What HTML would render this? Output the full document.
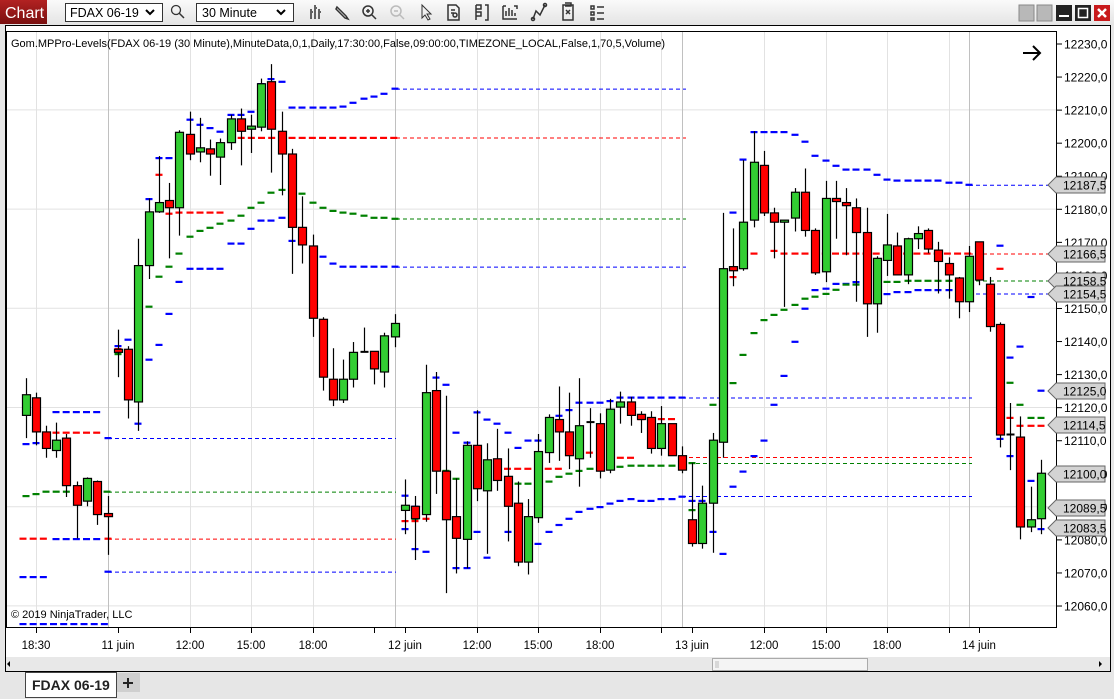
<!DOCTYPE html>
<html><head><meta charset="utf-8"><style>
html,body{margin:0;padding:0;background:#e6e6e6;width:1114px;height:699px;overflow:hidden;font-family:"Liberation Sans",sans-serif}
svg text{font-family:"Liberation Sans",sans-serif}
</style></head><body>
<svg id="s" width="1114" height="699" xmlns="http://www.w3.org/2000/svg">
<defs><linearGradient id="tb" x1="0" y1="0" x2="0" y2="1"><stop offset="0" stop-color="#fafafa"/><stop offset="1" stop-color="#e4e4e4"/></linearGradient>
<linearGradient id="red" x1="0" y1="0" x2="0" y2="1"><stop offset="0" stop-color="#b22222"/><stop offset="1" stop-color="#7a1010"/></linearGradient></defs>
<rect x="0" y="0" width="1114" height="699" fill="#e6e6e6"/>
<rect x="0" y="0" width="1114" height="25" fill="url(#tb)"/>
<rect x="0" y="0" width="47" height="24" fill="url(#red)"/>
<text x="5" y="18" fill="#fff" font-size="16">Chart</text>
<rect x="65.5" y="3.5" width="97" height="18" fill="#fff" stroke="#333"/>
<text x="70" y="17" font-size="12.5" fill="#000">FDAX 06-19</text>
<path d="M146 10l4 4 4-4" stroke="#000" stroke-width="2" fill="none"/>
<circle cx="176" cy="10" r="4.5" stroke="#333" stroke-width="1.3" fill="none"/><path d="M179 13l5 5" stroke="#333" stroke-width="1.5"/>
<rect x="196.5" y="3.5" width="97" height="18" fill="#fff" stroke="#333"/>
<text x="202" y="17" font-size="12.5" fill="#000">30 Minute</text>
<path d="M277 10l4 4 4-4" stroke="#000" stroke-width="2" fill="none"/>
<g stroke="#333" stroke-width="1.5" fill="none">
<path d="M311 9v10M315 5v14M319 9v10M312 12h1M316 8h1M320 12h1"/>
<path d="M337 7l9 9 2 3-3-1-9-9z"/>
<circle cx="368" cy="11" r="5"/><path d="M372 15l4 4M366 11h4M368 9v4"/>
<g stroke="#bbb"><circle cx="396" cy="11" r="5"/><path d="M400 15l4 4M394 11h4"/></g>
<path d="M422 5v13l3-3 3 5 2-1-3-5h4z" stroke-width="1"/>
<path d="M448 5h8l3 3v12h-11zM451 10h4M451 13h3"/><circle cx="455" cy="15" r="2"/>
<path d="M476 5v15M476 5h5v4h-5M476 12h5v4h-5M485 5h3v15h-3"/>
<path d="M503 6v13h14M506 16v-5M509 16v-8M512 16v-6M515 16v-3M503 6h3M514 6h3v3"/>
<path d="M533 19l3-8 4 4 5-10"/><circle cx="533" cy="19" r="1.5"/><circle cx="545" cy="5" r="1.5"/>
<path d="M563 5h10v15h-10zM565 3h6v3h-6M566 10l4 4M570 10l-4 4"/>
<path d="M591 6h3v3h-3zM591 12h3v3h-3zM591 18h3v2h-3zM597 7h7M597 13h7M597 19h7"/>
</g>
<rect x="1019" y="5" width="15" height="16" fill="#b8b8b8" stroke="#888"/>
<rect x="1037" y="5" width="15" height="16" fill="#b8b8b8" stroke="#888"/>
<rect x="1056" y="5" width="16" height="16" fill="#222"/><rect x="1059" y="15" width="10" height="2" fill="#fff"/>
<rect x="1075" y="5" width="16" height="16" fill="#222"/><rect x="1078.5" y="8.5" width="9" height="9" fill="none" stroke="#fff" stroke-width="1.5"/>
<rect x="1094" y="5" width="16" height="16" fill="#c8191b"/><path d="M1098 9l8 8M1106 9l-8 8" stroke="#fff" stroke-width="2.5"/>
<rect x="5.5" y="25.5" width="1105" height="646" fill="#fff" stroke="#000"/>
<g id="grid"></g>
<rect x="6.5" y="31.5" width="1050" height="596" fill="none" stroke="#000"/>
<g id="lv"></g>
<g id="cd"></g>
<g id="ax"></g>
<text x="11" y="47" font-size="11" fill="#000">Gom.MPPro-Levels(FDAX 06-19 (30 Minute),MinuteData,0,1,Daily,17:30:00,False,09:00:00,TIMEZONE_LOCAL,False,1,70,5,Volume)</text>
<path d="M1023 53h17M1033 46l7 7-7 7" stroke="#000" stroke-width="2" fill="none"/>
<text x="11" y="618" font-size="11" fill="#000">© 2019 NinjaTrader, LLC</text>
<rect x="6" y="657" width="1104" height="14" fill="#e8e8e8"/>
<path d="M10 661v6l-3-3z" fill="#000"/><path d="M1099 661v6l3-3z" fill="#000"/>
<rect x="712.5" y="658.5" width="155" height="12" fill="#f4f4f4" stroke="#aaa"/>
<path d="M716 661v7M718 661v7" stroke="#bbb"/>
<rect x="25.5" y="672.5" width="91" height="25" fill="#fff" stroke="#444"/>
<text x="32" y="690" font-size="14" font-weight="bold" fill="#222">FDAX 06-19</text>
<rect x="117" y="673" width="23" height="19" fill="#cfcfcf"/>
<path d="M123 683h10M128 678v10" stroke="#222" stroke-width="2"/>
</svg>
<script>
var NS="http://www.w3.org/2000/svg";
function el(p,t,a){var e=document.createElementNS(NS,t);for(var k in a)e.setAttribute(k,a[k]);p.appendChild(e);return e;}
var G=document.getElementById('grid'),L=document.getElementById('lv'),C=document.getElementById('cd'),A=document.getElementById('ax');
[109.9,209.1,308.3,407.5,506.7,605.9].forEach(function(y){el(G,'line',{x1:7,x2:1056,y1:y,y2:y,stroke:'#e2e2e2'});});
[36,190,251,313,477,538,600,661,764,826,887,949].forEach(function(x){el(G,'line',{x1:x+.5,x2:x+.5,y1:32,y2:627,stroke:'#e2e2e2'});});
[108,395,682,969].forEach(function(x){el(G,'line',{x1:x+.5,x2:x+.5,y1:32,y2:627,stroke:'#c0c0c0'});});
var col={b:'#0000ff',r:'#ff0000',g:'#008000'};
function m(x,y,c){el(L,'rect',{x:x-3.5,y:y-1,width:7,height:2.2,fill:col[c]});}
function seg(x1,x2,y,c){for(var x=x1;x<=x2+1;x+=10.17)m(x,y,c);}
function thin(x1,x2,y,c){el(L,'line',{x1:x1,x2:x2,y1:y+.5,y2:y+.5,stroke:col[c],'stroke-dasharray':'4,3'});}
seg(56,101,412,'b');seg(56,101,432.6,'r');m(26,496,'g');m(36,494,'g');seg(46,108,491.6,'g');
seg(23,45,538.6,'r');seg(56,101,539,'b');seg(23,45,577,'b');seg(23,108,624,'b');
m(26,444,'b');m(36,443,'b');m(46,440.7,'b');
thin(108,396,438,'b');thin(108,396,491.6,'g');thin(108,396,538.6,'r');thin(108,396,571.6,'b');
m(108,438,'b');m(108,538.6,'r');m(108,571.6,'b');
[[118,346],[128,339.6],[138,305],[149,199],[159,158],[169,158],[190,119.6],[200,124.7],[210,128],[220,131.6],[231,114.8],[241,114.8],[251,111.7],[261,84],[271,79],[282,81.7],[292,107.5],[302,107.5],[313,107.5],[323,107.5],[333,107.5],[343,106.5],[353,102.7],[364,98.6],[374,96.5],[384,93.7],[395,88.6]].forEach(function(a){m(a[0],a[1],'b');});
[[118,349],[128,363],[149,241.8],[159,174.7],[169,213.6],[179,212.5],[190,212.5],[200,212.5],[210,212.5],[220,212.5]].forEach(function(a){m(a[0],a[1],'r');});
seg(231,396,137.8,'r');
[[118,354],[128,371.6],[138,339.6],[149,306.6],[159,276.6],[169,266.6],[179,253.5],[190,236.6],[200,230.8],[210,227.7],[220,223.6],[231,220.5],[241,215.6],[251,207.7],[261,202.6],[271,192.6],[282,189.8],[292,190.9],[302,193.6],[313,202.6],[323,207.7],[333,210.8],[343,212.5],[353,213.6],[364,215.6],[374,217.7],[384,217.7],[395,218.7]].forEach(function(a){m(a[0],a[1],'g');});
[[138,423.6],[149,359.6],[159,344.8],[169,313.8],[179,281.8],[190,268.7],[200,268.7],[210,268.7],[220,268.7],[231,243.5],[241,243.5],[251,228.7],[261,220.5],[271,220.5],[282,217.7],[292,240.8],[302,240.8],[313,250.4],[323,256.6],[333,263.5],[343,266.6],[353,266.6],[364,266.6],[374,266.6],[384,266.6],[395,266.6]].forEach(function(a){m(a[0],a[1],'b');});
thin(396,686,88.6,'b');thin(396,686,137.5,'r');thin(396,686,218.5,'g');thin(396,686,266.6,'b');
[[405,495.6],[415,506.6],[426,427.8],[436,377.5],[446,384.7],[456,432.6],[467,442.6],[477,412.3],[487,419.5],[497,423.6],[508,432.6],[518,447.8],[528,440.5],[538,440.5],[559,415.7],[569,410],[579,402.6],[590,402.6],[600,402.6],[610,401],[620,397.5],[631,397.5],[641,397.5],[651,397.5],[661,397.5],[672,397.5]].forEach(function(a){m(a[0],a[1],'b');});
[[405,529],[415,549],[426,551.7],[456,568],[467,568],[477,531.8],[487,557.6],[508,531.8],[518,539.7],[528,554.8],[538,543.8],[549,531.8],[559,524.9],[569,518.7],[579,511.8],[590,508.7],[600,507],[610,503.5],[620,500.8],[631,499],[641,500.8],[651,500.8],[661,499],[672,499],[682,496.6]].forEach(function(a){m(a[0],a[1],'b');});
[[405,521],[415,521],[426,518.7],[436,400.6]].forEach(function(a){m(a[0],a[1],'r');});
seg(477,563,468.7,'r');seg(569,590,452.6,'r');seg(600,630,457.7,'r');seg(641,672,419,'r');
[[405,509],[415,518.7],[426,468.7],[446,470.8],[456,478.7],[467,480.8],[477,478.7],[487,468.7],[497,478.7],[508,480.8],[518,483.6],[528,483.6],[538,483.6],[549,481.5],[559,476.7],[569,473.6],[579,470.8],[590,468.7],[600,466.7],[610,466.7],[620,466.7],[631,465.6],[641,465.6],[651,465.6],[661,465.6],[672,465.6],[682,465.6]].forEach(function(a){m(a[0],a[1],'g');});
thin(682,972,397.5,'b');thin(682,972,457,'r');thin(682,972,463,'g');thin(682,972,496,'b');
m(682,397.5,'b');m(682,457.4,'r');m(692,463,'g');
[[692,500.8],[702,500.8],[713,531.8],[723,553.8],[733,486.6],[743,471.5],[754,456],[764,440.5],[774,404.7],[784,375.8],[795,341.7],[805,308.6],[815,290],[826,288.6],[836,283.8],[846,283.8],[856,282],[867,283.8],[877,294],[887,294],[897,292],[908,292],[918,290],[928,290],[938,290],[949,290],[959,294],[969,294]].forEach(function(a){m(a[0],a[1],'b');});
[[733,212.5],[743,159.5],[754,132],[764,132],[774,132],[784,132],[795,134.7],[805,141.6],[815,155.7],[826,160.5],[836,165.7],[846,169.5],[856,169.5],[867,169.5],[877,174.7],[887,179.5],[897,180.5],[908,180.5],[918,180.5],[928,180.5],[938,180.5],[949,182.6],[959,182.6],[969,184.7]].forEach(function(a){m(a[0],a[1],'b');});
[[733,277],[743,253.5],[754,253.5],[774,250.8],[784,253.5],[795,253.5]].forEach(function(a){m(a[0],a[1],'r');});
seg(805,969,253.5,'r');
[[692,510],[702,510],[713,404.7],[723,404.7],[733,383],[743,354.8],[754,333],[764,320],[774,314.8],[784,309.7],[795,304.8],[805,298.6],[815,296.6],[826,293.8],[836,289.7],[846,284.5],[856,284.5],[867,282.5],[877,281.8],[887,281.8],[897,281.8],[908,280.7],[918,280.7],[928,280.7],[938,280.7],[949,280.7],[959,280.7],[969,280.7]].forEach(function(a){m(a[0],a[1],'g');});
thin(969,1050,184.7,'b');thin(969,1050,253.5,'r');thin(969,1050,280.5,'g');thin(969,1050,293.5,'b');
[[1000,245.6],[1031,296.9],[1020,346.5],[1010,357.5],[1041,390.6],[1031,480.8],[1010,456],[1000,438.8],[1041,529]].forEach(function(a){m(a[0],a[1],'b');});
[[1000,268.7],[1010,417.8],[1020,425.7],[1031,425.7],[1041,425.7]].forEach(function(a){m(a[0],a[1],'r');});
[[1010,382.7],[1020,404.7],[1031,417.8],[1041,417.8]].forEach(function(a){m(a[0],a[1],'g');});
var D=[[26,368,426,384,404,'g'],[36,382,433,387,420,'r'],[46,414,445,420,436,'r'],[56,411,445,428,438,'g'],[66,422,483,426,472,'r'],[77,468,523,472,491,'r'],[87,464,492,465,487,'g'],[97,467,510,468,500,'r'],[108,482,539,499,502,'r'],
[118,321,367,340,343,'r'],[128,337,407,340,389,'r'],[138,233,419,259,391,'g'],[149,194,272,207,259,'g'],[159,153,208,198,207,'g'],[169,179,252,196,203,'r'],[179,128,230,130,203,'g'],[190,110,157,132,151,'r'],[200,116,159,145,149,'g'],[210,137,172,146,151,'r'],[220,136,181,140,154,'g'],[231,113,147,117,140,'g'],[241,107,162,117,129,'r'],[251,113,150,124,127,'g'],[261,78,129,83,125,'g'],[271,64,169,81,127,'r'],
[282,110,191,129,151,'r'],[292,146,267,151,222,'r'],[302,192,257,222,239,'r'],[313,229,328,240,310,'r'],[323,309,380,311,367,'r'],[333,339,395,369,389,'r'],[343,350,392,369,389,'g'],[353,333,377,343,369,'g'],[364,319,343,342.5,343.5,'k'],[374,342,374,342,359,'r'],[384,324,377,327,362,'g'],[395,306,338,315,328,'g'],
[405,466,519,491,496,'g'],[415,482,544,492,504,'r'],[426,355,507,382,500,'g'],[436,362,480,380,458,'r'],[446,385,576,458,505,'r'],[456,465,557,502,523,'r'],[467,429,552,433,524,'g'],[477,399,487,433,475,'r'],[487,431,538,447,477,'g'],[497,417,477,446,467,'r'],[508,436,526,463,492,'r'],[518,468,550,489,546,'r'],[528,485,558,502,546,'g'],[538,422,508,439,503,'g'],
[549,403,450,406,440,'g'],[559,376,448,408,420,'r'],[569,382,456,420,443,'r'],[579,368,473,414,446,'g'],[590,397,445,410.5,411.5,'k'],[600,402,465,412,458,'r'],[610,388,460,398,457,'g'],[620,381,412,391,396,'g'],[631,386,414,391,404,'r'],[641,400,421,403,408,'r'],[651,400,441,406,436,'r'],[661,395,443,412,436,'g'],[672,412,443,412,443,'r'],[682,434,460,443,457,'r'],
[692,450,531,505,528,'r'],[702,472,533,489,528,'g'],[713,421,537,428,489,'g'],[723,208,445,262,430,'g'],[733,223,279,260,264,'r'],[743,157,264,217,262,'g'],[754,129,222,159,215,'g'],[764,148,211,162,208,'r'],[774,203,252,208,217,'r'],[784,215,299,215,217,'g'],[795,184,226,188,213,'g'],
[805,165,231,188,225,'r'],[815,223,268,225,266,'r'],[826,177,275,194,265,'g'],[836,177,233,194,197,'r'],[846,184,249,198,201,'r'],[856,194,294,203,227,'r'],[867,203,328,227,296,'r'],[877,250,324,252,296,'g'],[887,209,269,239,254,'g'],[897,227,268,240,268,'r'],[908,232,277,233,268,'g'],[918,221,243,228,233,'g'],[928,223,247,225,243,'r'],[938,236,286,244,255,'r'],[949,251,291,257,268,'r'],[959,270,310,271,294,'r'],[969,240,304,250,294,'g'],
[979,236,278,236,273,'r'],[990,270,323,277,318,'r'],[1000,314,435,316,423,'r'],[1010,392,457,422.5,423.5,'k'],[1020,405,524,425,512,'r'],[1031,473,517,505,512,'g'],[1041,447,519,460,504,'g']];
function T(y){return (y-60)*1.0331+60;}
D.forEach(function(d){var x=d[0]+.5;
el(C,'line',{x1:x,x2:x,y1:T(d[1]),y2:T(d[2]),stroke:'#000','stroke-width':1.2});
var t=T(d[3]),b=T(d[4]);
if(d[5]=='k'){el(C,'line',{x1:x-4,x2:x+4,y1:t,y2:t,stroke:'#000','stroke-width':2});}
else el(C,'rect',{x:x-4,y:t,width:8,height:Math.max(b-t,1.5),fill:d[5]=='g'?'#32cd32':'#ff0000',stroke:'#000','stroke-width':1.2});
});
for(var i=0;i<=17;i++){var y=44+i*33.06,p=12230-i*10;
el(A,'line',{x1:1057,x2:1062,y1:y,y2:y,stroke:'#000'});
var t=el(A,'text',{x:1064,y:y+4.5,'font-size':12,fill:'#000'});t.textContent=p+',0';}
[['12187,5',185],['12166,5',254],['12158,5',281],['12154,5',294],['12125,0',391],['12114,5',425],['12100,0',474],['12089,5',508],['12083,5',528]].forEach(function(a){var y=a[1];
el(A,'polygon',{points:(1048)+','+y+' '+1056+','+(y-8)+' '+1105+','+(y-8)+' '+1105+','+(y+8)+' '+1056+','+(y+8),fill:'#d3d3d3',stroke:'#666'});
var t=el(A,'text',{x:1063,y:y+4.5,'font-size':12,fill:'#000'});t.textContent=a[0];});
[['18:30',36],['11 juin',118],['12:00',190],['15:00',251],['18:00',313],['',374],['12 juin',405],['12:00',477],['15:00',538],['18:00',600],['',661],['13 juin',692],['12:00',764],['15:00',826],['18:00',887],['',949],['14 juin',979]].forEach(function(a){
el(A,'line',{x1:a[1]+.5,x2:a[1]+.5,y1:627,y2:633,stroke:'#000'});
if(a[0]){var t=el(A,'text',{x:a[1],y:649,'font-size':11.5,fill:'#000','text-anchor':'middle'});t.textContent=a[0];}});
</script>
</body></html>
